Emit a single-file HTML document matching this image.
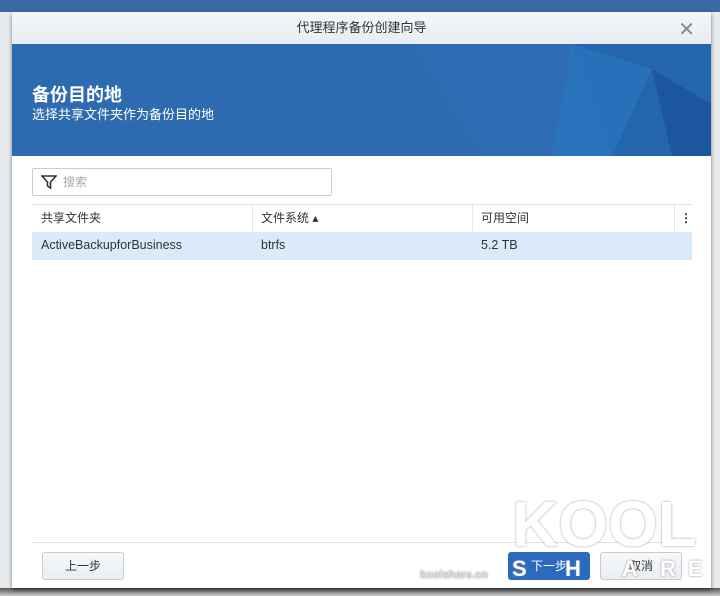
<!DOCTYPE html>
<html><head><meta charset="utf-8"><style>
*{margin:0;padding:0;box-sizing:border-box}
html,body{width:720px;height:596px;overflow:hidden}
body{background:#e8ebee;font-family:"Liberation Sans","Noto Sans CJK SC",sans-serif;position:relative}
.topbar{position:absolute;left:0;top:0;width:720px;height:12px;background:#3c68a8}
.bot{position:absolute;left:0;top:588px;width:720px;height:8px;background:linear-gradient(#555,#ccc)}
.dlg{position:absolute;left:12px;top:12px;width:699px;height:576px;background:#fff;box-shadow:0 2px 4px rgba(0,0,0,.5);overflow:hidden}
.tb{height:32px;background:linear-gradient(#f4f6f9,#e8edf3);text-align:center;font-size:13px;line-height:32px;color:#333}
.x{position:absolute;right:16px;top:5px;font-size:20px;color:#888}
.ban{height:112px;background:#2d6ab0;position:relative;overflow:hidden}
.ban h1{position:absolute;left:20px;top:37px;font-size:18px;color:#fff;font-weight:bold}
.ban p{position:absolute;left:20px;top:60px;font-size:13px;color:#fff}
.search{position:absolute;left:20px;top:156px;width:300px;height:28px;border:1px solid #c9ced6;border-radius:2px;font-size:12px;color:#aaa;line-height:26px;padding-left:30px}
.search svg{position:absolute;left:8px;top:5px}
.hdr{position:absolute;left:20px;top:192px;width:660px;height:28px;border-top:1px solid #dde1e6;font-size:12px;color:#333;line-height:27px}
.hdr span,.row span{position:absolute;left:9px}
.row{position:absolute;left:20px;top:220px;width:660px;height:28px;background:#dbeaf8;font-size:12.5px;color:#333;line-height:27px}
.sep{position:absolute;top:0;width:1px;height:28px;background:#e3e6ea}
.line{position:absolute;left:20px;top:530px;width:660px;height:1px;background:#dde1e6}
.btn{position:absolute;top:540px;height:28px;width:82px;border:1px solid #c6ccd4;border-radius:3px;background:linear-gradient(#f7f9fb,#e9eef3);font-size:12px;text-align:center;line-height:26px;color:#333}
.wm{position:absolute;font-weight:bold;color:#fff;text-shadow:0 0 2px #888;line-height:1}
</style></head><body>
<div class="topbar"></div>
<div class="bot"></div>
<div class="dlg">
<div class="tb">代理程序备份创建向导</div><div class="x">✕</div>
<div class="ban">
<svg width="699" height="112" style="position:absolute;left:0;top:0">
<polygon points="400,0 560,0 560,112 470,112" fill="#2f6fb6" opacity=".6"/>
<polygon points="560,0 699,0 699,112 600,112" fill="#2466ae"/>
<polygon points="560,0 640,25 600,112 540,112" fill="#2a76c0" opacity=".7"/>
<polygon points="640,25 699,60 699,112 660,112" fill="#1c55a0"/>
</svg>
<h1>备份目的地</h1><p>选择共享文件夹作为备份目的地</p></div>
<div class="search"><svg width="16" height="16" viewBox="0 0 16 16"><path d="M1 2h14l-5.5 6v6l-3-2V8z" fill="none" stroke="#333" stroke-width="1.6"/></svg>搜索</div>
<div class="hdr"><span>共享文件夹</span><span style="left:229px">文件系统 ▴</span><span style="left:449px">可用空间</span><span style="left:648px;font-weight:bold">⋮</span>
<div class="sep" style="left:220px"></div><div class="sep" style="left:440px"></div><div class="sep" style="left:642px"></div></div>
<div class="row"><span>ActiveBackupforBusiness</span><span style="left:229px">btrfs</span><span style="left:449px">5.2 TB</span></div>
<div class="line"></div>
<div class="btn" style="left:30px">上一步</div>
<div class="btn" style="left:496px;background:#2a6bc0;border-color:#2a6bc0;color:#fff">下一步</div>
<div class="btn" style="left:588px">取消</div>
<div class="wm" style="left:500px;top:480px;font-size:64px;opacity:.9">KOOL</div>
<div class="wm" style="left:500px;top:546px;font-size:22px">S</div>
<div class="wm" style="left:553px;top:546px;font-size:22px">H</div>
<div class="wm" style="left:610px;top:546px;font-size:22px">A</div>
<div class="wm" style="left:648px;top:546px;font-size:22px">R</div>
<div class="wm" style="left:676px;top:546px;font-size:22px">E</div>
<div class="wm" style="left:408px;top:558px;font-size:11px;color:#ddd">koolshare.cn</div>
</div>
</body></html>
